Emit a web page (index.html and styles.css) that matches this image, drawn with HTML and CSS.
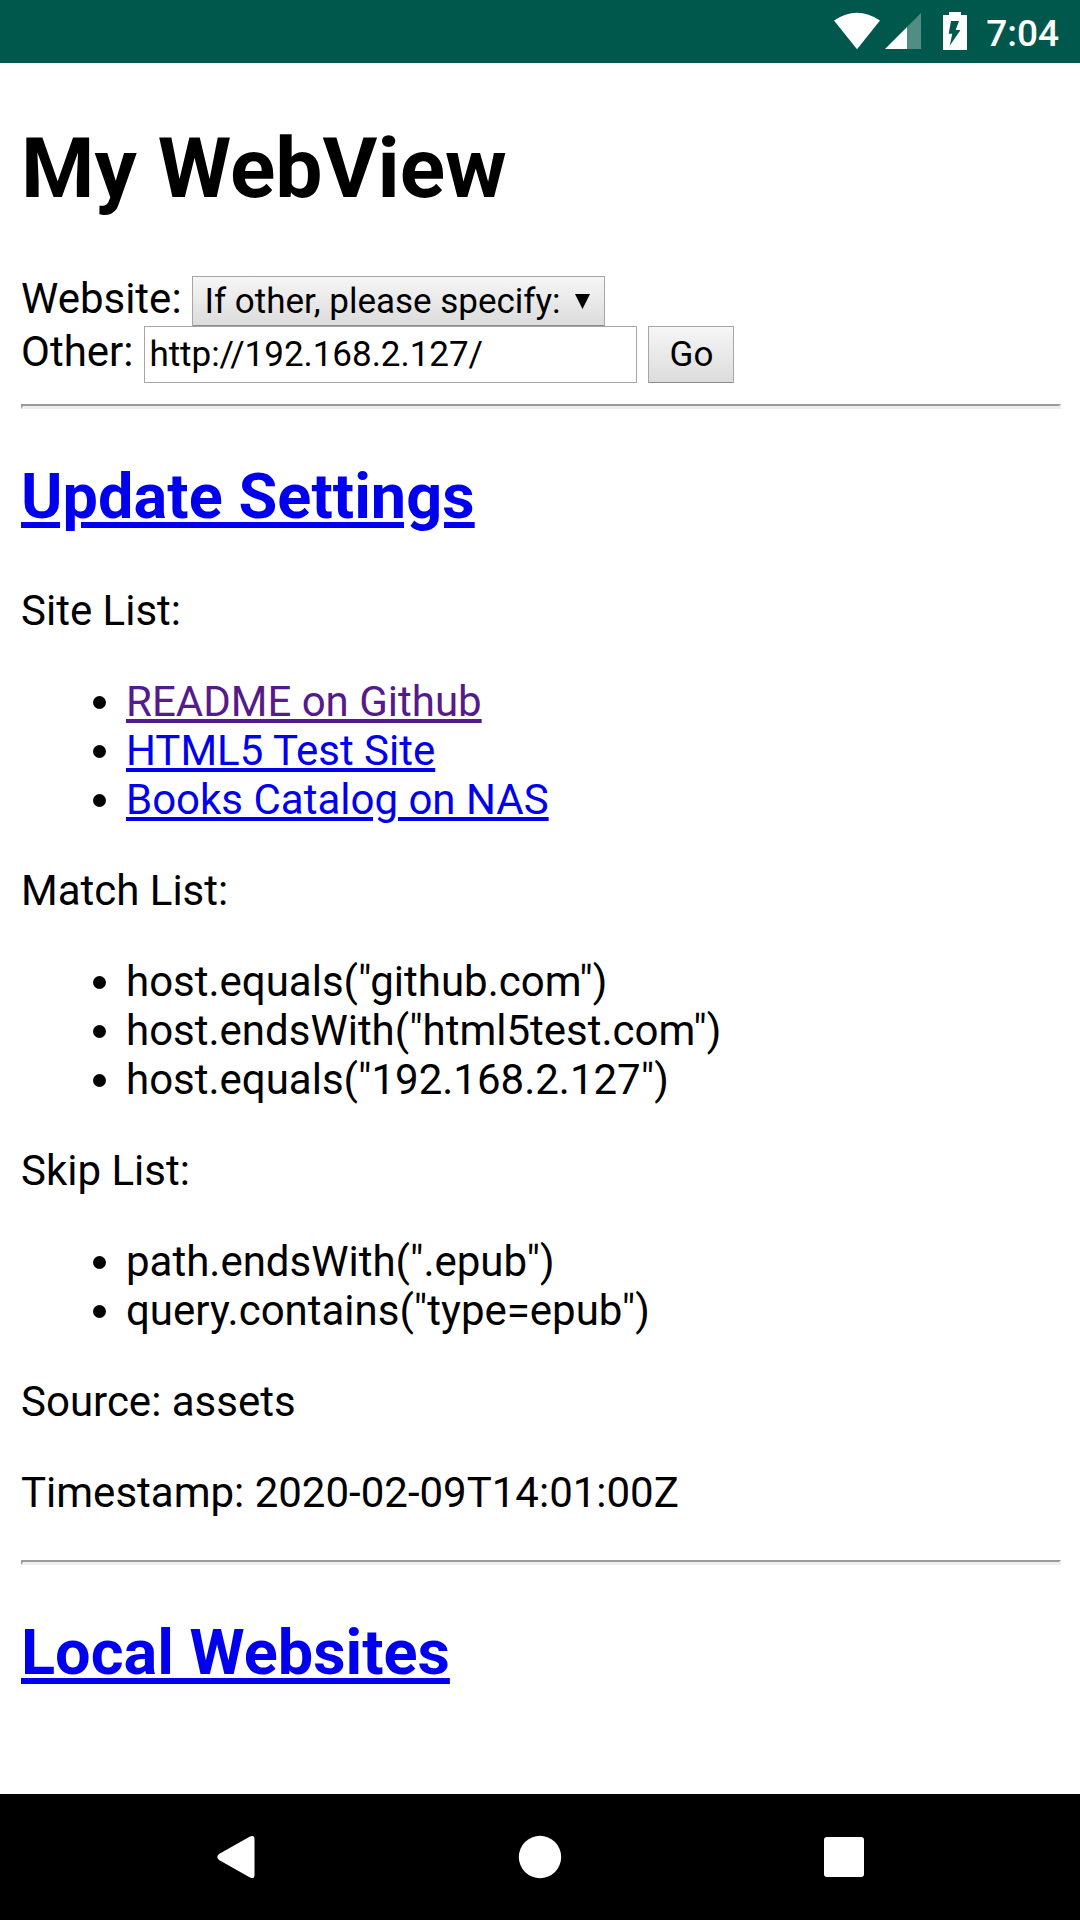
FILE: index.html
```html
<!DOCTYPE html>
<html lang="en">
<head>
<meta charset="utf-8">
<title>My WebView</title>
<link rel="stylesheet" href="styles.css">
</head>
<body>
<header class="status">
  <svg class="status-icons" width="140" height="63" viewBox="833 0 140 63" fill="#fff">
    <path d="M834 20.500Q857 5 880 20.500L857 49.300Z"/>
    <path d="M921 13V49H907V27Z" opacity=".32"/>
    <path d="M907 27V49H885Z"/>
    <path fill-rule="evenodd" d="M943 15H949V12H961V15H967V50H943ZM951 21L948.7 33.7H952.3L949.7 45.7L960.5 30H955.7L959 21Z"/>
  </svg>
  <span class="clock">7:04</span>
</header>
<main class="page">
  <h1>My WebView</h1>
  <form class="form">
    <div class="row site-row"><label>Website:</label><div class="select"><span>If other, please specify:</span><svg width="15" height="15" viewBox="0 0 15 15"><path d="M0 0H15L7.5 15Z"/></svg></div></div>
    <div class="row other-row"><label>Other:</label><input class="url" type="text" value="http://192.168.2.127/"><button class="go" type="button">Go</button></div>
  </form>
  <hr>
  <h2><a href="#">Update Settings</a></h2>
  <p>Site List:</p>
  <ul>
    <li><a class="seen" href="#">README on Github</a></li>
    <li><a href="#">HTML5 Test Site</a></li>
    <li><a href="#">Books Catalog on NAS</a></li>
  </ul>
  <p>Match List:</p>
  <ul>
    <li>host.equals("github.com")</li>
    <li>host.endsWith("html5test.com")</li>
    <li>host.equals("192.168.2.127")</li>
  </ul>
  <p>Skip List:</p>
  <ul>
    <li>path.endsWith(".epub")</li>
    <li>query.contains("type=epub")</li>
  </ul>
  <p>Source: assets</p>
  <p class="last">Timestamp: 2020-02-09T14:01:00Z</p>
  <hr>
  <h2 class="local"><a href="#">Local Websites</a></h2>
</main>
<nav class="nav">
  <svg width="1080" height="126" viewBox="0 0 1080 126" fill="#fff">
    <path d="M219 60L250 42.500Q254.500 40.500 254.500 45V81Q254.500 85.500 250 83.500L219 66Q215.500 63 219 60Z"/>
    <circle cx="540" cy="63" r="21.2"/>
    <rect x="824" y="43" width="40" height="40" rx="3"/>
  </svg>
</nav>
</body>
</html>
```
FILE: styles.css
```css
* { box-sizing: border-box; }
body { margin: 0; width: 1080px; height: 1920px; display: flex; flex-direction: column; background: #fff; color: #000; font: 42px/49px Roboto, sans-serif; overflow: hidden; }
.status { height: 63px; flex: none; background: #00574b; display: flex; align-items: center; justify-content: flex-end; gap: 10px; padding-right: 21px; color: #fff; }
.clock { width: 76px; text-align: right; font-size: 37px; font-weight: 500; padding-top: 3px; }
.page { flex: 1; min-height: 0; padding: 0 19px 0 21px; display: flow-root; }
h1 { font-size: 84px; line-height: 98px; margin: 57px 0 58px; }
h2 { font-size: 63px; line-height: 74px; margin: 51px 0 52px; letter-spacing: .05px; }
h2.local { letter-spacing: 0; }
p { margin: 42px 0; }
p.last { margin-bottom: 43px; }
ul { margin: 42px 0; padding-left: 105px; }
hr { border: 2px solid; border-color: #9a9a9a #eee #eee #9a9a9a; border-bottom-width: 3px; height: 5px; margin: 21px 0; }
a { color: #00e; text-decoration-thickness: 4px; text-underline-offset: 3px; }
h2 a { text-decoration-thickness: 6px; text-underline-offset: 4px; }
.seen { color: #551a8b; }
.row { display: flex; }
.site-row { height: 50px; }
.other-row { height: 57px; }
.row label { margin-right: 10px; }
.site-row label { line-height: 45px; }
.other-row label { line-height: 51px; margin-right: 11px; }
.select { width: 413px; height: 50px; border: 1px solid #a6a6a6; border-bottom-color: #8c8c8c; border-radius: 1px; background: linear-gradient(#f6f6f6, #dcdcdc); font-size: 35px; letter-spacing: -.02px; padding: 0 14px 0 12px; display: flex; align-items: center; justify-content: space-between; }
.url { width: 493px; height: 57px; border: 1px solid #a6a6a6; font: 35px Roboto, sans-serif; letter-spacing: -.03px; padding: 0 4px; }
.go { width: 86px; height: 57px; margin-left: 11px; border: 1px solid #a6a6a6; border-bottom-color: #8c8c8c; border-radius: 1px; background: linear-gradient(#f6f6f6, #dcdcdc); font: 35px Roboto, sans-serif; padding: 0; }
.nav { height: 126px; flex: none; background: #000; }
.nav svg { display: block; }
```
